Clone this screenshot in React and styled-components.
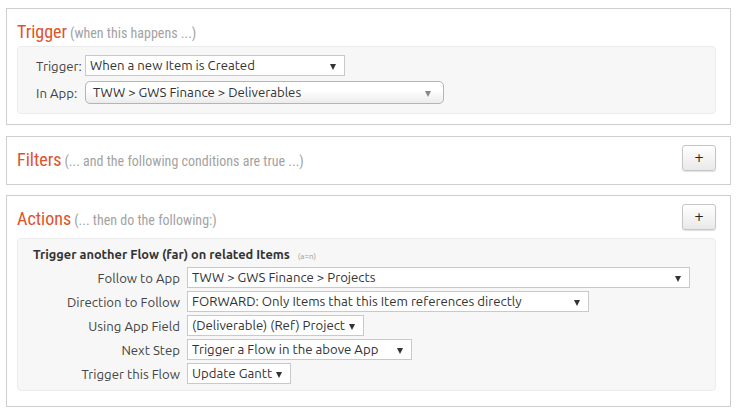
import styled, { createGlobalStyle } from 'styled-components';

const GlobalStyle = createGlobalStyle`
  html, body {
    margin: 0;
    padding: 0;
    background: #fff;
  }
  body {
    font-family: 'Ubuntu', 'Noto Sans', 'DejaVu Sans', sans-serif;
    font-size: 13.2px;
    color: #333;
  }
`;

const Page = styled.div`
  display: flex;
  flex-direction: column;
  gap: 10px;
  padding: 8px 7px 0 6px;
  box-sizing: border-box;
  width: 738px;
`;

const Panel = styled.section`
  border: 1px solid #cfcfcf;
  padding: 9px 14px ${props => props.$bottom || 10}px 10px;
  margin-bottom: ${props => props.$after || 0}px;
  background: #fff;
`;

const PanelHeader = styled.div`
  display: flex;
  align-items: flex-start;
  justify-content: space-between;
  height: 28px;
`;

const Heading = styled.h2`
  margin: 0;
  line-height: 28px;
  font-family: 'Roboto Condensed', 'Liberation Sans Narrow', 'Roboto', sans-serif;
  font-weight: 400;
  font-size: 18px;
  color: #e0522a;
  white-space: nowrap;
`;

const Hint = styled.span`
  font-size: 14px;
  color: #a3a3a3;
  margin-left: 3px;
`;

const PlusButton = styled.button`
  width: 34px;
  height: 26px;
  margin-top: -1px;
  border: 1px solid #c6c6c6;
  border-radius: 3px;
  background: linear-gradient(#ffffff, #e9e9e9);
  box-shadow: 0 1px 1px rgba(0, 0, 0, 0.12);
  font-family: 'DejaVu Sans', sans-serif;
  font-size: 12px;
  font-weight: normal;
  color: #222;
  line-height: 1;
  padding: 0;
  cursor: pointer;
`;

const InnerBox = styled.div`
  margin-top: ${props => props.$top || 0}px;
  background: #f7f7f7;
  border: 1px solid #ececec;
  border-radius: 4px;
  padding: ${props => props.$pad};
`;

const TriggerGrid = styled.div`
  display: grid;
  grid-template-columns: 49px auto;
  row-gap: 5px;
  align-items: center;
  justify-items: start;
`;

const ActionGrid = styled.div`
  display: grid;
  grid-template-columns: 147px auto;
  column-gap: 7px;
  row-gap: 3px;
  align-items: center;
  justify-items: start;
`;

const Label = styled.label`
  color: #444;
  white-space: nowrap;
  justify-self: ${props => (props.$right ? 'end' : 'start')};
`;

const Select = styled.div`
  position: relative;
  box-sizing: border-box;
  width: ${props => props.$w}px;
  height: ${props => props.$h || 21}px;
  line-height: ${props => (props.$h || 21) - 2}px;
  padding: 0 20px 0 ${props => props.$pl || 4}px;
  border: 1px solid ${props => (props.$rounded ? '#b5b5b5' : '#c9c9c9')};
  border-radius: ${props => (props.$rounded ? 5 : 0)}px;
  background: ${props => (props.$rounded ? 'linear-gradient(#ffffff 40%, #ececec)' : '#fff')};
  color: #333;
  white-space: nowrap;
  overflow: hidden;

  &::after {
    content: '';
    position: absolute;
    right: ${props => (props.$rounded ? 12 : 8)}px;
    top: 50%;
    margin-top: -2px;
    border-left: 3.5px solid transparent;
    border-right: 3.5px solid transparent;
    border-top: 6px solid ${props => (props.$rounded ? '#888' : '#333')};
  }
`;

const ActionTitle = styled.div`
  font-weight: bold;
  font-size: 12.8px;
  color: #333;
  height: 20px;
  line-height: 20px;
  margin-bottom: 3px;
`;

const Tiny = styled.span`
  font-weight: normal;
  font-size: 8px;
  line-height: 1;
  color: #999;
  margin-left: 8px;
`;

const rows = [
  { label: 'Follow to App', value: 'TWW > GWS Finance > Projects', w: 503 },
  { label: 'Direction to Follow', value: 'FORWARD: Only Items that this Item references directly', w: 402 },
  { label: 'Using App Field', value: '(Deliverable) (Ref) Project', w: 177 },
  { label: 'Next Step', value: 'Trigger a Flow in the above App', w: 225 },
  { label: 'Trigger this Flow', value: 'Update Gantt', w: 104 },
];

export default function App() {
  return (
    <>
      <GlobalStyle />
      <Page>
        <Panel $after={1}>
          <PanelHeader>
            <Heading>
              Trigger<Hint>(when this happens ...)</Hint>
            </Heading>
          </PanelHeader>
          <InnerBox $pad="8px 18px 9px 18px">
            <TriggerGrid>
              <Label>Trigger:</Label>
              <Select $w={260}>When a new Item is Created</Select>
              <Label>In App:</Label>
              <Select $w={359} $h={23} $rounded $pl={7}>
                TWW &gt; GWS Finance &gt; Deliverables
              </Select>
            </TriggerGrid>
          </InnerBox>
        </Panel>

        <Panel>
          <PanelHeader>
            <Heading>
              Filters<Hint>(... and the following conditions are true ...)</Hint>
            </Heading>
            <PlusButton>+</PlusButton>
          </PanelHeader>
        </Panel>

        <Panel $bottom={15}>
          <PanelHeader>
            <Heading>
              Actions<Hint>(... then do the following:)</Hint>
            </Heading>
            <PlusButton>+</PlusButton>
          </PanelHeader>
          <InnerBox $top={5} $pad="5px 14px 6px 15px">
            <ActionTitle>
              Trigger another Flow (far) on related Items<Tiny>(a=n)</Tiny>
            </ActionTitle>
            <ActionGrid>
              {rows.map(r => [
                <Label $right key={r.label}>{r.label}</Label>,
                <Select $w={r.w} key={r.label + '-s'}>{r.value}</Select>,
              ])}
            </ActionGrid>
          </InnerBox>
        </Panel>
      </Page>
    </>
  );
}
